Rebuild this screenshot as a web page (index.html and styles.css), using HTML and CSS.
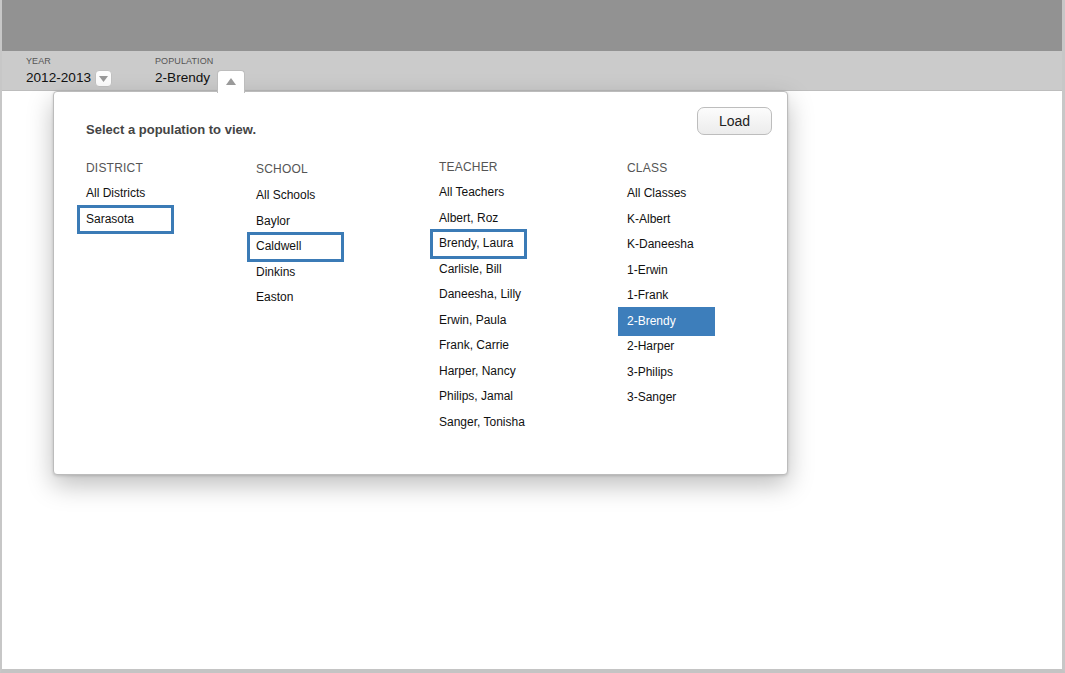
FILE: index.html
```html
<!DOCTYPE html>
<html>
<head>
<meta charset="utf-8">
<link rel="stylesheet" href="styles.css">
</head>
<body>
<div class="frame">
  <div class="topbar"></div>
  <div class="toolbar">
    <div class="field year">
      <div class="flabel">YEAR</div>
      <div class="fvalue"><span class="vtext">2012-2013</span><span class="ddbtn"><svg width="9" height="6" viewBox="0 0 9 6"><polygon points="0,0 9,0 4.5,6" fill="#9a9a9a"/></svg></span></div>
    </div>
    <div class="field pop">
      <div class="flabel">POPULATION</div>
      <div class="fvalue"><span class="vtext">2-Brendy</span><span class="tab"><svg width="10" height="7" viewBox="0 0 10 7"><polygon points="0,7 10,7 5,0" fill="#9a9a9a"/></svg></span></div>
    </div>
  </div>
  <div class="content"></div>

  <div class="popup">
    <div class="phead">
      <div class="ptitle">Select a population to view.</div>
      <button class="load">Load</button>
    </div>
    <div class="cols">
      <div class="col c1">
        <div class="chead">DISTRICT</div>
        <div class="item">All Districts</div>
        <div class="item sel">Sarasota</div>
      </div>
      <div class="col c2">
        <div class="chead">SCHOOL</div>
        <div class="item">All Schools</div>
        <div class="item">Baylor</div>
        <div class="item sel">Caldwell</div>
        <div class="item">Dinkins</div>
        <div class="item">Easton</div>
      </div>
      <div class="col c3">
        <div class="chead">TEACHER</div>
        <div class="item">All Teachers</div>
        <div class="item">Albert, Roz</div>
        <div class="item sel">Brendy, Laura</div>
        <div class="item">Carlisle, Bill</div>
        <div class="item">Daneesha, Lilly</div>
        <div class="item">Erwin, Paula</div>
        <div class="item">Frank, Carrie</div>
        <div class="item">Harper, Nancy</div>
        <div class="item">Philips, Jamal</div>
        <div class="item">Sanger, Tonisha</div>
      </div>
      <div class="col c4">
        <div class="chead">CLASS</div>
        <div class="item">All Classes</div>
        <div class="item">K-Albert</div>
        <div class="item">K-Daneesha</div>
        <div class="item">1-Erwin</div>
        <div class="item">1-Frank</div>
        <div class="item active">2-Brendy</div>
        <div class="item">2-Harper</div>
        <div class="item">3-Philips</div>
        <div class="item">3-Sanger</div>
      </div>
    </div>
  </div>
</div>
</body>
</html>
```

FILE: styles.css
```css
html, body {
  margin: 0;
  padding: 0;
  background: #ffffff;
}
body {
  font-family: "Liberation Sans", Arial, Helvetica, sans-serif;
  color: #111;
}
.frame {
  position: relative;
  width: 1065px;
  height: 673px;
  box-sizing: border-box;
  border-left: 2px solid #c7c7c7;
  border-right: 3px solid #c7c7c7;
  border-bottom: 4px solid #c4c4c4;
  display: flex;
  flex-direction: column;
  background: #fff;
}
.topbar {
  height: 51px;
  background: #929292;
  flex: none;
}
.toolbar {
  height: 39px;
  background: #cbcbcb;
  border-bottom: 1px solid #bdbdbd;
  display: flex;
  padding-left: 24px;
  flex: none;
  box-sizing: content-box;
}
.field {
  display: flex;
  flex-direction: column;
}
.field.year { width: 129px; }
.flabel {
  font-size: 9px;
  line-height: 10px;
  color: #555;
  margin-top: 5px;
  letter-spacing: 0.1px;
}
.fvalue {
  margin-top: 3px;
  display: flex;
  align-items: flex-start;
}
.vtext {
  font-size: 13.6px;
  line-height: 17px;
  color: #111;
}
.ddbtn {
  width: 17px;
  height: 17px;
  margin-top: 1px;
  margin-left: 4px;
  box-sizing: border-box;
  background: #fdfdfd;
  border: 1px solid #c2c2c2;
  border-radius: 4px;
  display: flex;
  align-items: center;
  justify-content: center;
}
.tab {
  position: relative;
  z-index: 3;
  width: 28px;
  height: 23px;
  box-sizing: border-box;
  margin-left: 7px;
  margin-top: 1px;
  background: #fff;
  border: 1px solid #bdbdbd;
  border-bottom: none;
  border-radius: 4px 4px 0 0;
  display: flex;
  align-items: center;
  justify-content: center;
  padding-bottom: 2px;
}
.content {
  flex: 1;
  background: #fff;
}
.popup {
  position: absolute;
  left: 51px;
  top: 91px;
  width: 735px;
  height: 384px;
  box-sizing: border-box;
  background: #fff;
  border: 1px solid #bcbcbc;
  border-radius: 4px;
  box-shadow: 0 10px 26px rgba(0,0,0,0.26), 0 1px 3px rgba(0,0,0,0.15);
  padding: 15px 15px 0 32px;
  z-index: 2;
}
.phead {
  display: flex;
  justify-content: space-between;
  align-items: flex-start;
}
.ptitle {
  font-size: 13px;
  font-weight: bold;
  color: #444;
  line-height: 16px;
  margin-top: 15px;
}
.load {
  width: 75px;
  height: 28px;
  border: 1px solid #bdbdbd;
  border-radius: 7px;
  background: linear-gradient(#fcfcfc, #ececec);
  font-family: "Liberation Sans", Arial, sans-serif;
  font-size: 14px;
  color: #222;
  padding: 0;
}
.cols {
  display: grid;
  grid-template-columns: 170px 183px 188px 100px;
  margin-top: 22px;
}
.c2 { margin-top: 1px; }
.c2 .chead { margin-bottom: 6px; }
.c3 { margin-top: -1px; }
.chead {
  font-size: 12px;
  line-height: 16px;
  color: #555;
  margin-bottom: 5px;
  letter-spacing: 0.2px;
}
.item {
  font-size: 12px;
  line-height: 25.5px;
  height: 25.5px;
  width: 93px;
  box-sizing: border-box;
  margin-left: -7px;
  padding-left: 7px;
  color: #111;
  white-space: nowrap;
}
.item.sel {
  outline: 3px solid #3b7bb6;
  outline-offset: -1px;
}
.item.active {
  background: #3d7ebb;
  box-shadow: 0 0 0 2px #3d7ebb;
  color: #fff;
}
```
